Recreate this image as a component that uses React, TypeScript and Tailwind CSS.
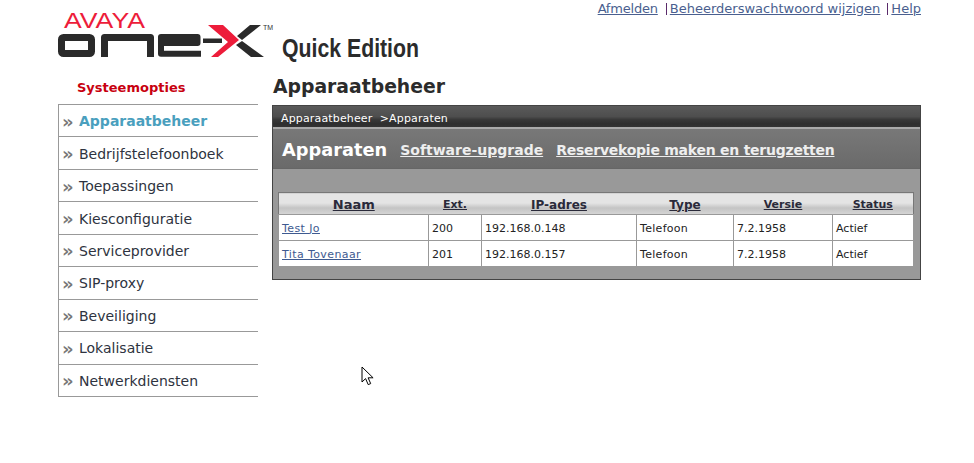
import React from "react";

const menuItems = [
  "Apparaatbeheer",
  "Bedrijfstelefoonboek",
  "Toepassingen",
  "Kiesconfiguratie",
  "Serviceprovider",
  "SIP-proxy",
  "Beveiliging",
  "Lokalisatie",
  "Netwerkdiensten",
];

const devices = [
  { name: "Test Jo", ext: "200", ip: "192.168.0.148", type: "Telefoon", version: "7.2.1958", status: "Actief" },
  { name: "Tita Tovenaar", ext: "201", ip: "192.168.0.157", type: "Telefoon", version: "7.2.1958", status: "Actief" },
];

function Logo() {
  return (
    <svg width="400" height="54" viewBox="0 0 400 54" className="block">
      <text x="6" y="19" fontFamily="Liberation Sans" fontSize="22" fill="#ed1c3a" textLength="81" lengthAdjust="spacingAndGlyphs">
        AVAYA
      </text>
      {/* one */}
      <g fill="none" stroke="#2a2a2a" strokeWidth="7" strokeLinejoin="round">
        <rect x="3.500" y="28.500" width="30" height="16" rx="2" />
        <path d="M46.500 48V28.500H92.500V48" />
      </g>
      <path d="M143 44.800H103V28H139.500V34H106" fill="none" stroke="#2a2a2a" strokeWidth="6" strokeLinejoin="round" />
      {/* dash + X */}
      <path d="M145 29.500h19v4.500h-19z" fill="#2a2a2a" />
      <path d="M150 16H165L181 31 160 48H153L170 33z" fill="#ed1c3a" />
      <path d="M192 16H203L184 31 179 27zM178 36l6-4 22 16H193z" fill="#2a2a2a" />
      <text x="205" y="21" fontFamily="Liberation Sans" fontSize="7" fill="#333">
        TM
      </text>
      <text x="224" y="48" fontFamily="Liberation Sans" fontWeight="700" fontSize="25" fill="#2b2b2b" textLength="137" lengthAdjust="spacingAndGlyphs">
        Quick Edition
      </text>
    </svg>
  );
}

function Cursor() {
  return (
    <svg width="14" height="20" viewBox="0 0 14 20" className="absolute left-[361px] top-[366px]">
      <path d="M1 1v15l3.600-3.400 2.600 6 2.500-1-2.600-5.800h5z" fill="#fff" stroke="#000" strokeWidth="1" />
    </svg>
  );
}

export default function App() {
  return (
    <div className="relative h-[463px] w-[974px] overflow-hidden bg-white font-['DejaVu_Sans',Verdana,sans-serif]">
      <div className="ml-[58px] w-[863px]">
        <header className="flex h-[72px] items-start justify-between">
          <div className="pt-[9px]">
            <Logo />
          </div>
          <nav className="flex items-center pt-px text-[13px] leading-[16px] text-[#4a5f8f]">
            <a className="tracking-[-0.2px] underline">Afmelden</a>
            <span className="ml-2 mr-[3px] h-3 w-px bg-[#5a2a6a]" />
            <a className="underline">Beheerderswachtwoord wijzigen</a>
            <span className="ml-[7px] mr-[3px] h-3 w-px bg-[#5a2a6a]" />
            <a className="underline">Help</a>
          </nav>
        </header>

        <div className="flex gap-[14px]">
          <aside className="w-[200px]">
            <h3 className="h-[32px] pl-[19px] pt-[7px] text-[13px] font-bold leading-[18px] text-[#c8000f]">Systeemopties</h3>
            <ul className="border-l border-t border-[#999]">
              {menuItems.map((item, i) => (
                <li key={item} className="flex h-[32.45px] items-center border-b border-[#999] pl-[3px] pt-[2px] text-[14px] text-[#2e3340]">
                  <span className="w-4 text-[18px] font-bold leading-none text-[#777]">»</span>
                  <span className={i === 0 ? "ml-[1px] font-bold text-[#4a9fbe]" : "ml-[1px]"}>{item}</span>
                </li>
              ))}
            </ul>
          </aside>

          <main className="flex-1">
            <h1 className="h-[33px] pl-px pt-[3px] text-[18.8px] font-bold leading-[24px] text-[#2b2b2b]">Apparaatbeheer</h1>
            <section className="border border-[#444] bg-[#999] pb-3">
              <div className="flex h-[23px] items-center border-b-2 border-[#aaa] bg-[linear-gradient(#5a5a5a_0%,#4e4e4e_50%,#383838_65%,#2e2e2e_85%,#333_100%)] pl-2 pt-[5px] text-[11px] tracking-[0.15px] text-white">
                Apparaatbeheer&nbsp; &gt;Apparaten
              </div>
              <div className="flex h-[40px] items-center gap-[13px] border-b border-[#666] bg-[linear-gradient(#787878,#6a6a6a)] pl-[9px] pt-[3px]">
                <h2 className="text-[17.8px] font-bold text-white">Apparaten</h2>
                <a className="text-[14px] font-bold text-[#eee] underline">Software-upgrade</a>
                <a className="text-[14px] font-bold tracking-[-0.25px] text-[#eee] underline">Reservekopie maken en terugzetten</a>
              </div>
              <div className="px-[5px] pt-[23px]">
                <table className="w-[635px] table-fixed border-collapse text-[11px] leading-[14px] text-[#222]">
                  <colgroup>
                    <col className="w-[150px]" />
                    <col className="w-[53px]" />
                    <col className="w-[155px]" />
                    <col className="w-[97px]" />
                    <col className="w-[99px]" />
                    <col className="w-[81px]" />
                  </colgroup>
                  <thead>
                    <tr className="h-[22px] border border-[#777] bg-[linear-gradient(#e4e4e4_45%,#c4c4c4_70%,#d4d4d4)] text-[#2a2a3a]">
                      <th className="pt-[2px] text-[13px] underline">Naam</th>
                      <th className="pt-[2px] underline">Ext.</th>
                      <th className="pt-[2px] text-[12px] underline">IP-adres</th>
                      <th className="pt-[2px] text-[12px] underline">Type</th>
                      <th className="pt-[2px] underline">Versie</th>
                      <th className="pt-[2px] underline">Status</th>
                    </tr>
                  </thead>
                  <tbody className="bg-white">
                    {devices.map((d) => (
                      <tr key={d.name} className="h-[26px]">
                        <td className="border border-[#999] px-[3px] pt-[2px]">
                          <a className="tracking-[0.4px] text-[#3e5a90] underline">{d.name}</a>
                        </td>
                        <td className="border border-[#999] px-[3px] pt-[2px]">{d.ext}</td>
                        <td className="border border-[#999] px-[3px] pt-[2px]">{d.ip}</td>
                        <td className="border border-[#999] px-[3px] pt-[2px] tracking-[0.3px]">{d.type}</td>
                        <td className="border border-[#999] px-[3px] pt-[2px]">{d.version}</td>
                        <td className="border border-[#999] px-[3px] pt-[2px]">{d.status}</td>
                      </tr>
                    ))}
                  </tbody>
                </table>
              </div>
            </section>
          </main>
        </div>
      </div>
      <Cursor />
    </div>
  );
}
